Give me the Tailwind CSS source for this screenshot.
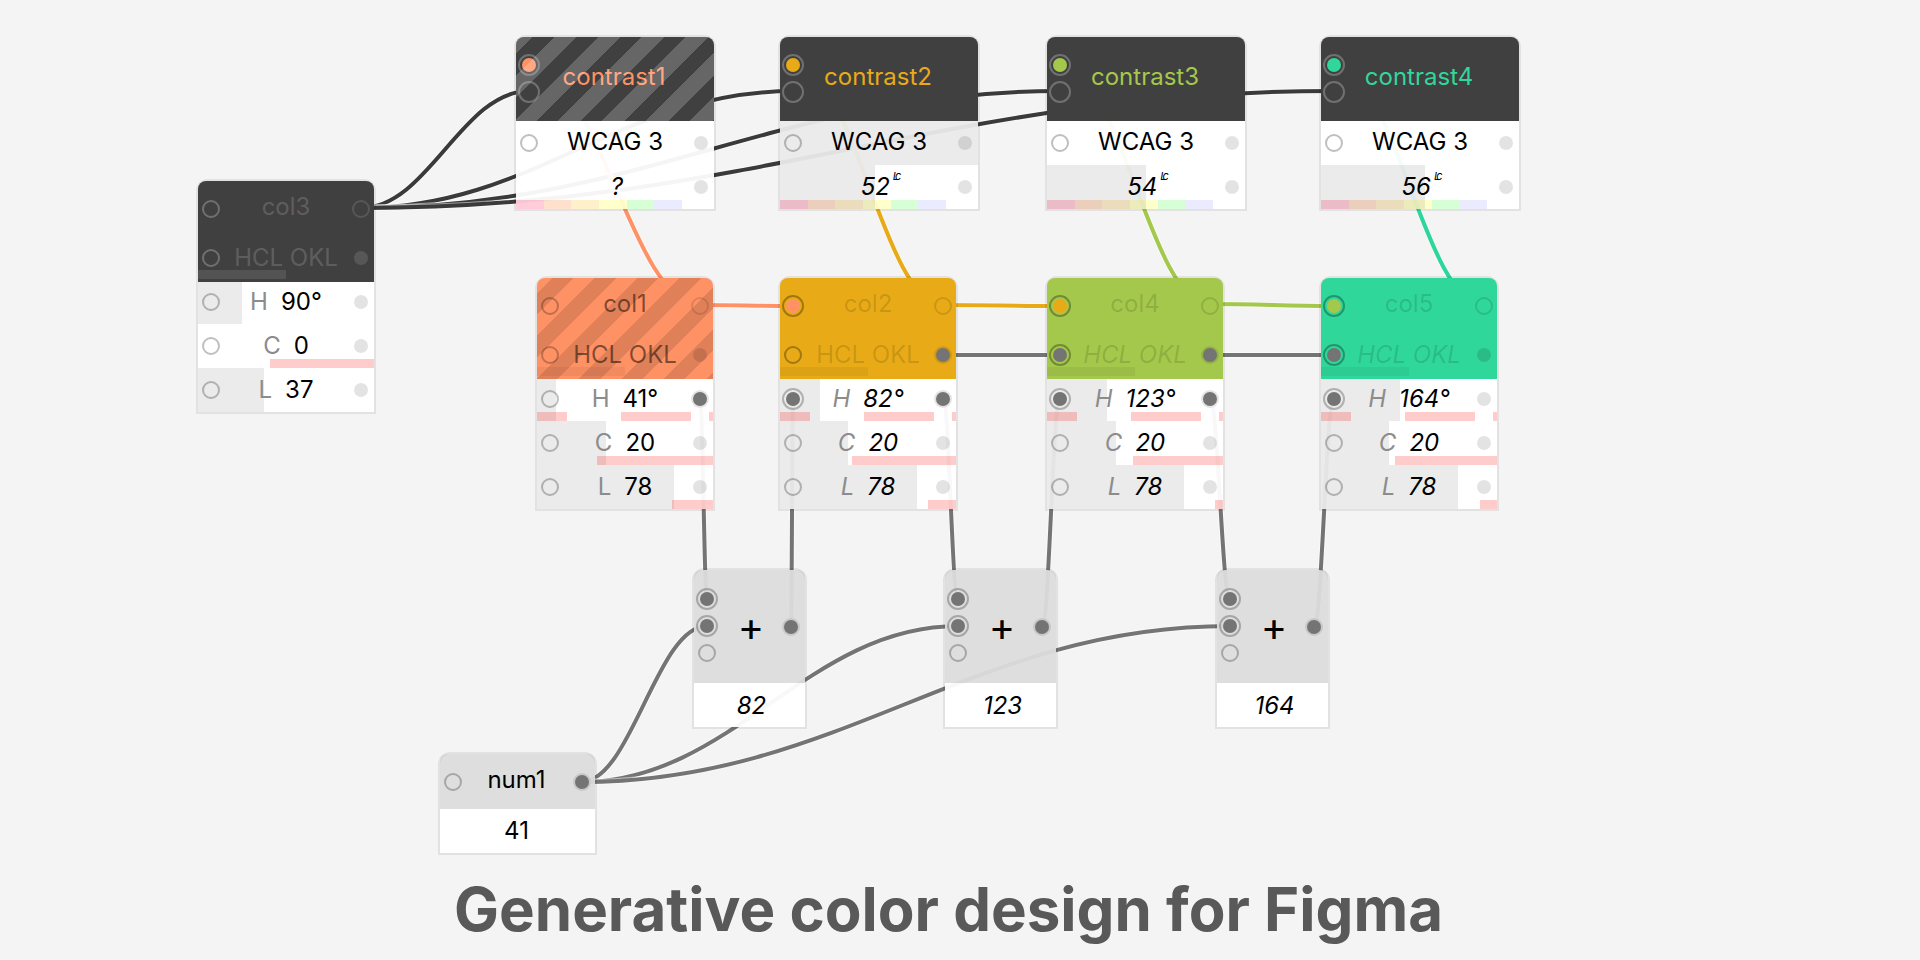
<!DOCTYPE html>
<html lang="en">
<head>
<meta charset="utf-8">
<meta name="viewport" content="width=device-width, initial-scale=1">
<title>Generative color design for Figma</title>
<script src="https://cdn.jsdelivr.net/npm/@tailwindcss/browser@4"></script>
</head>
<body class="bg-[#f4f4f4] font-['Inter',sans-serif] text-2xl text-black">
<main class="relative min-h-screen min-w-[1600px] overflow-hidden pt-[873px]">
  <svg id="wires" class="absolute inset-0 h-full w-full" fill="none" aria-hidden="true"></svg>
  <div id="nodes"></div>
  <h1 class="relative pl-[454px] text-[60px] leading-[72px] font-bold text-[#595959]">Generative color design for Figma</h1>
</main>
<script>
// ---- ports ----
const ringTone = {
  row: 'border-black/25', faint: 'border-black/12', dark: 'border-black/30',
  light: 'border-white/25', lightFaint: 'border-white/12'
};
const fillTone = {
  off: 'bg-black/11', gray: 'bg-[#747474]', dim: 'bg-black/12', dimLight: 'bg-white/12',
  orange: 'bg-[#ff9265]', yellow: 'bg-[#e8ab17]', green: 'bg-[#a4c84b]', teal: 'bg-[#30d79b]'
};
// Open input or output
const ring = (tone, name) =>
  `<button aria-label="${name}" class="block size-[18px] shrink-0 rounded-full border-2 ${ringTone[tone]}"></button>`;
// Connected input: ring around a dot
const joined = (tone, fill, name) =>
  `<button aria-label="${name}" class="flex size-[22px] shrink-0 items-center justify-center rounded-full border-2 ${ringTone[tone]}"><span class="size-[14px] rounded-full ${fillTone[fill]}"></span></button>`;
const bigRing = (tone, name) =>
  `<button aria-label="${name}" class="block size-[22px] shrink-0 rounded-full border-2 ${ringTone[tone]}"></button>`;
// Output dot, with a halo when connected
const dot = (fill, name, halo = '') =>
  `<button aria-label="${name}" class="flex size-[18px] shrink-0 items-center justify-center rounded-full ${halo}"><span class="size-[14px] rounded-full ${fillTone[fill]}"></span></button>`;

// One line of a node: left port column, centred text, right port column
const line = (left, text, right, cls = '', pad = 'pb-[2px]') =>
  `<div class="relative grid grid-cols-[26px_1fr_26px] items-center ${cls}">
     <div class="flex justify-center">${left}</div>
     <div class="flex justify-center whitespace-nowrap leading-6 ${pad}">${text}</div>
     <div class="flex justify-center">${right}</div>
   </div>`;
const level = w => w ? `<div class="absolute inset-y-0 left-0 bg-black/8" style="width:${w}px"></div>` : '';
const warn = list => list.map(([a, b]) =>
  `<div class="absolute bottom-0 h-[9px] bg-[#ff0000]/20" style="left:${a}px;width:${b - a}px"></div>`).join('');

const shell = (x, y, width, body) =>
  `<section class="absolute ${width} rounded-t-[10px] outline-2 outline-black/7" style="left:${x}px;top:${y}px">${body}</section>`;

// ---- contrast nodes ----
const bands = ['bg-[#ff0044]/20', 'bg-[#ff6600]/20', 'bg-[#ffb400]/20', 'bg-[#ffff00]/20', 'bg-[#33ff33]/20', 'bg-[#9b9bff]/20'];
const unit = '<span class="-mt-1 flex text-[11px] leading-none"><span>L</span><span class="-ml-1">c</span></span>';
const contrast = n => shell(n.x, 37, 'w-[198px]', `
  <div class="relative flex h-[84px] items-center overflow-hidden rounded-t-[8px] bg-[#404040]">
    <div class="flex w-[26px] flex-col items-center gap-[5px] pb-[1px]">${joined('light', n.fill, n.name + ' color 1')}${bigRing('light', n.name + ' color 2')}</div>
    <div class="flex-1 pr-7 pb-1 text-center leading-6 ${n.text}">${n.name}</div>
    ${n.striped ? '<div class="pointer-events-none absolute inset-0 bg-[repeating-linear-gradient(135deg,rgba(255,255,255,.2)_0_12px,transparent_12px_27px,rgba(255,255,255,.2)_27px_31px)]"></div>' : ''}
  </div>
  <div class="bg-white/95">
    <div class="relative">${level(n.full ? 198 : 0)}${line(ring('row', 'Method input'), 'WCAG 3', dot('off', 'Method output'), 'h-11')}</div>
    <div class="relative">
      <div class="absolute bottom-0 left-0 flex h-[9px] w-[166px]">${bands.map(b => `<div class="flex-1 ${b}"></div>`).join('')}</div>
      ${level(n.level)}
      ${line('', `<span class="flex items-start gap-[3px] pl-1 italic"><span>${n.value}</span>${n.unit ? unit : ''}</span>`, dot('off', 'Contrast output'), 'h-11', '')}
    </div>
  </div>`);

// ---- color nodes ----
const color = n => {
  const row = (key, r, h, lineH, pad) => `
    <div class="relative ${h}">${level(r.level)}${warn(r.warn)}
      ${line(r.in ? joined('row', 'gray', key + ' input') : ring('row', key + ' input'),
        `<span class="flex gap-[13px] ${n.italic}"><span class="text-[#8c8c8c]">${key}</span><span>${r.value}</span></span>`,
        r.out ? dot('gray', key + ' output', 'bg-[#e4e4e4]') : dot('off', key + ' output'), lineH, pad)}
    </div>`;
  return shell(n.x, n.y, 'w-[176px]', `
  <div class="relative h-[101px] overflow-hidden rounded-t-[8px] ${n.bg}">
    ${n.striped ? '<div class="pointer-events-none absolute inset-0 bg-[repeating-linear-gradient(135deg,transparent_0_11px,rgba(0,0,0,.12)_11px_26px,transparent_26px_30px)]"></div>' : ''}
    <div class="absolute bottom-[3px] left-0 h-[9px] w-[88px] ${n.bar}"></div>
    ${line(n.topIn, `<span class="${n.text}">${n.name}</span>`, ring(n.outTone, 'Color output'), 'h-[55px]', 'pb-[4px]')}
    ${line(n.spaceIn, `<span class="${n.text} ${n.spaceItalic}">HCL OKL</span>`, n.spaceOut, 'h-[44px]', '')}
  </div>
  <div class="bg-white/95">${row('H', n.H, 'h-[42px]', 'h-10', 'pb-[1px]')}${row('C', n.C, 'h-11', 'h-11', '')}${row('L', n.L, 'h-11', 'h-11', '')}</div>`);
};

// ---- number nodes ----
const plus = n => shell(n.x, 570, 'w-[111px]', `
  <div class="grid h-[113px] grid-cols-[26px_1fr_28px] items-center rounded-t-[8px] bg-[#dcdcdc]/95">
    <div class="flex flex-col items-center gap-[5px] pb-[2px]">${joined('row', 'gray', 'Input 1')}${joined('row', 'gray', 'Input 2')}<div class="flex h-[22px] items-center">${ring('row', 'Input 3')}</div></div>
    <div class="pl-[5px] text-center text-[40px] leading-9 font-normal">+</div>
    <div class="flex justify-center">${dot('gray', 'Sum output', 'bg-[#c8c8c8]')}</div>
  </div>
  <div class="flex h-11 items-center justify-center bg-white/95 pt-[2px] pl-1 italic leading-6">${n.value}</div>`);

const number = shell(440, 754, 'w-[155px]', `
  <div class="rounded-t-[8px] bg-[#dcdcdc]/95">${line(ring('row', 'Number input'), '<span class="pr-[2px]">num1</span>', dot('gray', 'Number output', 'bg-[#c8c8c8]'), 'h-[55px]', 'pb-[4px]')}</div>
  <div class="flex h-11 items-center justify-center bg-white/95 pr-[2px] leading-6">41</div>`);

const hue = [[0, 30], [84, 154], [172, 176]];
document.getElementById('nodes').innerHTML = [
  { x: 516, name: 'contrast1', fill: 'orange', text: 'text-[#ff9265]', striped: true, value: '?' },
  { x: 780, name: 'contrast2', fill: 'yellow', text: 'text-[#e8ab17]', full: true, level: 95, value: '52', unit: true },
  { x: 1047, name: 'contrast3', fill: 'green', text: 'text-[#a4c84b]', level: 99, value: '54', unit: true },
  { x: 1321, name: 'contrast4', fill: 'teal', text: 'text-[#30d79b]', level: 104, value: '56', unit: true }
].map(contrast).join('') + [
  { x: 198, y: 181, name: 'col3', bg: 'bg-[#404040]', bar: 'bg-white/10', text: 'text-white/18', italic: '', spaceItalic: '',
    topIn: ring('light', 'Color input'), outTone: 'lightFaint', spaceIn: ring('light', 'Space input'), spaceOut: dot('dimLight', 'Space output'),
    H: { value: '90°', level: 44, warn: [] }, C: { value: '0', level: 0, warn: [[72, 176]] }, L: { value: '37', level: 66, warn: [] } },
  { x: 537, y: 278, name: 'col1', bg: 'bg-[#ff9265]', striped: true, bar: 'bg-black/5', text: 'text-black/50', italic: '', spaceItalic: '',
    topIn: ring('row', 'Color input'), outTone: 'faint', spaceIn: ring('row', 'Space input'), spaceOut: dot('dim', 'Space output'),
    H: { value: '41°', level: 19, warn: hue, out: true }, C: { value: '20', level: 69, warn: [[60, 176]] }, L: { value: '78', level: 137, warn: [[135, 176]] } },
  { x: 780, y: 278, name: 'col2', bg: 'bg-[#e8ab17]', bar: 'bg-black/5', text: 'text-black/14', italic: 'italic', spaceItalic: '',
    topIn: joined('dark', 'orange', 'Color input'), outTone: 'faint', spaceIn: ring('dark', 'Space input'), spaceOut: dot('gray', 'Space output', 'bg-black/10'),
    H: { value: '82°', level: 40, warn: hue, in: true, out: true }, C: { value: '20', level: 68, warn: [[72, 176]] }, L: { value: '78', level: 137, warn: [[148, 176]] } },
  { x: 1047, y: 278, name: 'col4', bg: 'bg-[#a4c84b]', bar: 'bg-black/5', text: 'text-black/14', italic: 'italic', spaceItalic: 'italic',
    topIn: joined('dark', 'yellow', 'Color input'), outTone: 'faint', spaceIn: joined('dark', 'gray', 'Space input'), spaceOut: dot('gray', 'Space output', 'bg-black/10'),
    H: { value: '123°', level: 60, warn: hue, in: true, out: true }, C: { value: '20', level: 69, warn: [[86, 176]] }, L: { value: '78', level: 137, warn: [[168, 176]] } },
  { x: 1321, y: 278, name: 'col5', bg: 'bg-[#30d79b]', bar: 'bg-black/5', text: 'text-black/14', italic: 'italic', spaceItalic: 'italic',
    topIn: joined('dark', 'green', 'Color input'), outTone: 'faint', spaceIn: joined('dark', 'gray', 'Space input'), spaceOut: dot('dim', 'Space output'),
    H: { value: '164°', level: 79, warn: hue, in: true }, C: { value: '20', level: 68, warn: [[74, 176]] }, L: { value: '78', level: 137, warn: [[159, 176]] } }
].map(color).join('') + [
  { x: 694, value: '82' }, { x: 945, value: '123' }, { x: 1217, value: '164' }
].map(plus).join('') + number;

// ---- wires: [x1, y1, x2, y2, color] ----
const wires = [
  [361, 208, 529, 91, '#3a3a3a'], [361, 208, 794, 91, '#3a3a3a'], [361, 208, 1060, 91, '#3a3a3a'], [361, 208, 1334, 91, '#3a3a3a'],
  [529, 65, 700, 305, '#ff9265'], [794, 65, 943, 305, '#e8ab17'], [1060, 65, 1210, 305, '#a4c84b'], [1334, 65, 1484, 305, '#2dd69a'],
  [700, 305, 793, 306, '#ff9265'], [943, 305, 1060, 306, '#e8ab17'], [1210, 304, 1334, 306, '#a4c84b'],
  [943, 355, 1060, 355, '#747474'], [1210, 355, 1334, 355, '#747474'],
  [700, 399, 707, 599, '#747474'], [791, 627, 793, 399, '#747474'], [943, 399, 958, 599, '#747474'],
  [1042, 627, 1060, 399, '#747474'], [1210, 399, 1230, 599, '#747474'], [1314, 627, 1334, 399, '#747474'],
  [581, 782, 707, 626, '#747474'], [581, 782, 958, 626, '#747474'], [581, 782, 1230, 626, '#747474']
];
document.getElementById('wires').innerHTML = wires.map(([a, b, c, d, color]) => {
  const k = (c - a) * 0.4;
  const path = `M${a} ${b}C${a + k} ${b} ${c - k} ${d} ${c} ${d}`;
  return `<path d="${path}" stroke="#fff" stroke-opacity=".5" stroke-width="6"/><path d="${path}" stroke="${color}" stroke-width="4"/>`;
}).join('');
</script>
</body>
</html>
